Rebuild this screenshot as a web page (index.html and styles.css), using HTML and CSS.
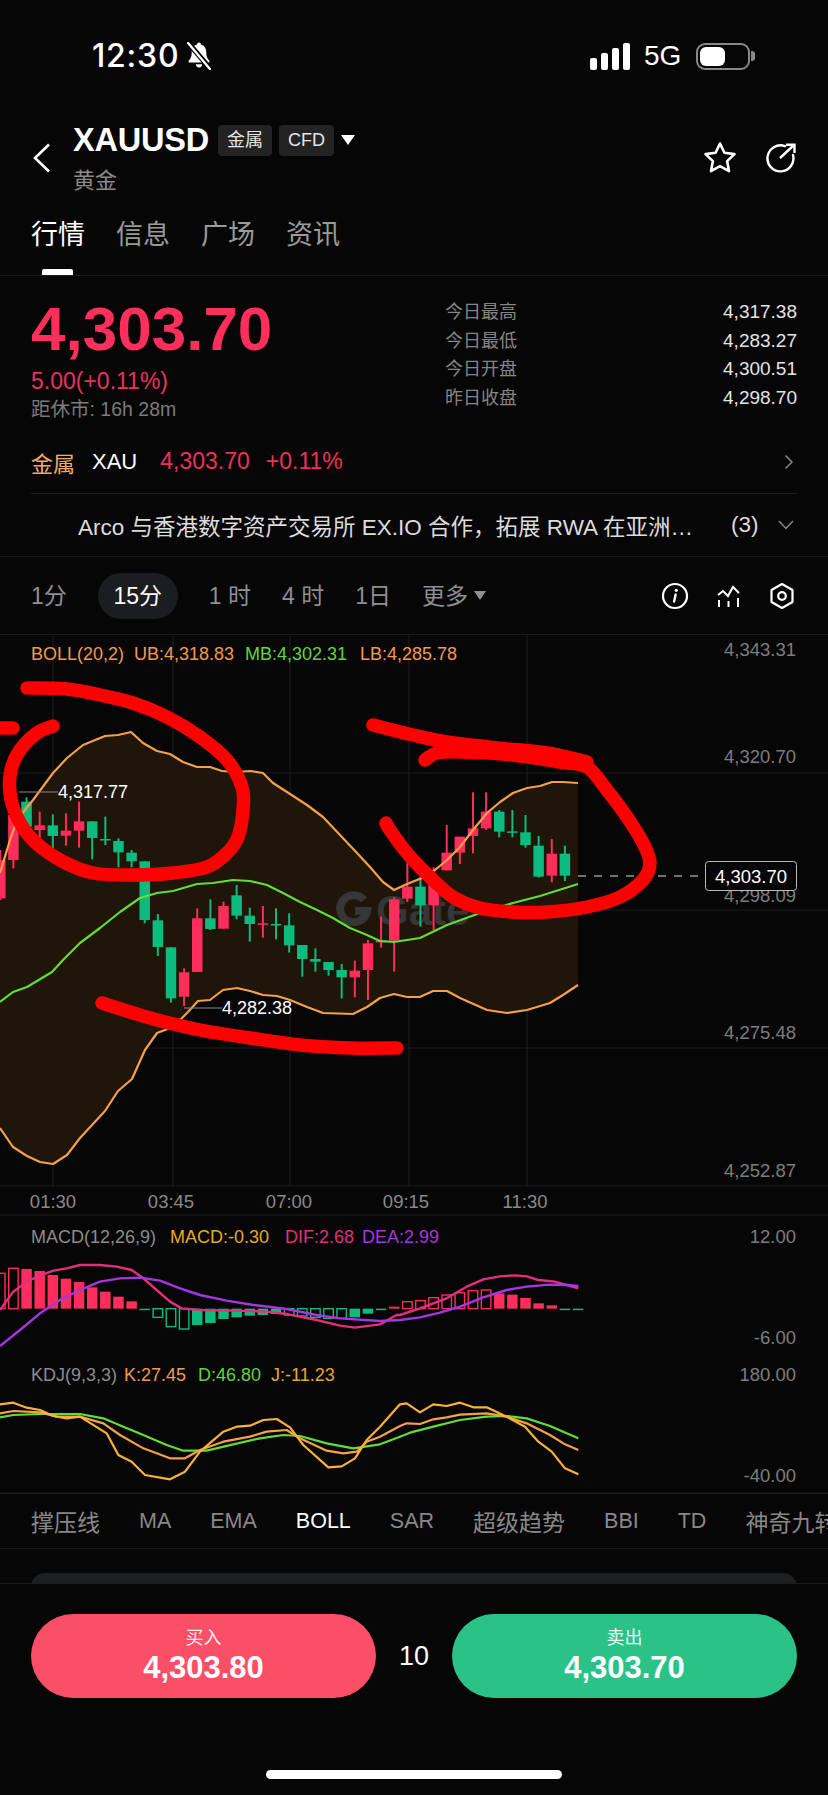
FILE: index.html
```html
<!DOCTYPE html>
<html>
<head>
<title>XAUUSD</title>
<meta charset="UTF-8" name="viewport" content="width=device-width,initial-scale=1.0">
<link rel="stylesheet" href="styles.css">
</head>
<body>
<div class="status">
	<div class="status-left">
		<span class="clock">12:30</span>
		<svg class="bell" viewBox="2.500 1 23 27" width="28" height="28">
			<path fill="#fff" d="M14 1.5c-1.1 0-1.9.8-1.9 1.8C8.600 4.200 7 7.400 7 11c0 4.300-1.200 6.300-3 8v1.800h20V19c-1.800-1.700-3-3.700-3-8 0-3.600-1.600-6.800-5.100-7.700 0-1-.8-1.800-1.900-1.800z"/>
			<path fill="#fff" d="M11 22.500a3 3 0 0 0 6 0z"/>
			<path stroke="#060606" stroke-width="5" d="M3 1l22 26"/>
			<path stroke="#fff" stroke-width="2.200" stroke-linecap="round" d="M3.500 2l21 25"/>
		</svg>
	</div>
	<div class="status-right">
		<div class="signal"><i class="s1"></i><i class="s2"></i><i class="s3"></i><i class="s4"></i></div>
		<span class="net">5G</span>
		<div class="battery"><div class="battery-fill"></div></div>
		<div class="battery-nub"></div>
	</div>
</div>

<div class="head">
	<svg class="back" viewBox="0 0 18 30" width="18" height="30"><path d="M16 1.500L2 15l14 13.500" fill="none" stroke="#fff" stroke-width="2.600"/></svg>
	<div class="head-main">
		<div class="head-top">
			<span class="symbol">XAUUSD</span>
			<span class="tag">金属</span>
			<span class="tag">CFD</span>
			<span class="tri"></span>
		</div>
		<div class="head-sub">黄金</div>
	</div>
	<svg class="star" viewBox="0 0 34 32" width="34" height="32"><path d="M17 2.500l4.400 9.300 10.100 1.300-7.400 7 1.900 10-9-4.900-9 4.900 1.900-10-7.400-7 10.100-1.300z" fill="none" stroke="#fff" stroke-width="2.600" stroke-linejoin="round"/></svg>
	<svg class="share" viewBox="0 0 32 30" width="32" height="30"><path d="M20 3.200A13 13 0 1 0 28 12" fill="none" stroke="#fff" stroke-width="2.400" stroke-linecap="round"/><path d="M15 15L29 2M21 1.800h8.500V10" fill="none" stroke="#fff" stroke-width="2.400"/></svg>
</div>

<div class="tabs">
	<span class="tab active">行情</span>
	<span class="tab">信息</span>
	<span class="tab">广场</span>
	<span class="tab">资讯</span>
</div>

<div class="quote">
	<div class="quote-left">
		<div class="price">4,303.70</div>
		<div class="change">5.00(+0.11%)</div>
		<div class="closing">距休市: 16h 28m</div>
	</div>
	<div class="stats">
		<div class="stat"><span>今日最高</span><b>4,317.38</b></div>
		<div class="stat"><span>今日最低</span><b>4,283.27</b></div>
		<div class="stat"><span>今日开盘</span><b>4,300.51</b></div>
		<div class="stat"><span>昨日收盘</span><b>4,298.70</b></div>
	</div>
</div>

<div class="sector">
	<span class="sector-name">金属</span>
	<span class="sector-code">XAU</span>
	<span class="sector-price">4,303.70</span>
	<span class="sector-pct">+0.11%</span>
	<svg class="chev-right" viewBox="0 0 10 16" width="10" height="16"><path d="M1.500 1.500L8 8l-6.500 6.500" fill="none" stroke="#888" stroke-width="1.500"/></svg>
</div>

<div class="news">
	<span class="news-text">Arco 与香港数字资产交易所 EX.IO 合作，拓展 RWA 在亚洲…</span>
	<span class="news-count">(3)</span>
	<svg class="chev-down" viewBox="0 0 16 10" width="16" height="10"><path d="M1 1l7 7.500L15 1" fill="none" stroke="#888" stroke-width="1.500"/></svg>
</div>

<div class="periods">
	<span class="period">1分</span>
	<span class="period current">15分</span>
	<span class="period">1 时</span>
	<span class="period">4 时</span>
	<span class="period">1日</span>
	<span class="period more">更多<i class="tri-small"></i></span>
	<div class="tools">
		<svg viewBox="0 0 28 28" width="28" height="28"><circle cx="14" cy="14" r="12" fill="none" stroke="#fff" stroke-width="2.200"/><path d="M14.600 12.500l-1.500 7" stroke="#fff" stroke-width="2.400" stroke-linecap="round"/><circle cx="15.300" cy="8.300" r="1.600" fill="#fff"/></svg>
		<svg viewBox="0 0 26 26" width="26" height="26"><path d="M2 12l5-4 5 5 5-9 6 6" fill="none" stroke="#fff" stroke-width="2"/><path d="M3 17v7M12.500 18v6M22 15v9" stroke="#fff" stroke-width="2"/></svg>
		<svg viewBox="0 0 26 28" width="26" height="28"><path d="M13 2l10.500 6v12L13 26 2.500 20V8z" fill="none" stroke="#fff" stroke-width="2.200" stroke-linejoin="round"/><circle cx="13" cy="14" r="3.800" fill="none" stroke="#fff" stroke-width="2.200"/></svg>
	</div>
</div>

<svg id="chart" class="chart" viewBox="0 634 828 859" width="828" height="859">
	<g id="grid"></g>
	<g id="watermark" class="watermark">
		<path d="M364 900a13.500 13.500 0 1 0 3 11h-12" fill="none" stroke-width="8"/>
		<text x="376" y="925">Gate</text>
	</g>
	<g id="candles"></g>
	<g id="lines"></g>

	<g class="mark">
		<path d="M19 792H58M184 1008H222"/>
	</g>
	<text class="lbl white" x="58" y="798">4,317.77</text>
	<text class="lbl white" x="222" y="1014">4,282.38</text>

	<text class="lbl boll-o" x="31" y="660">BOLL(20,2)</text>
	<text class="lbl boll-o" x="134" y="660">UB:4,318.83</text>
	<text class="lbl boll-g" x="245" y="660">MB:4,302.31</text>
	<text class="lbl boll-o" x="360" y="660">LB:4,285.78</text>

	<g class="axis">
		<text x="796" y="656">4,343.31</text>
		<text x="796" y="763">4,320.70</text>
		<text x="796" y="902">4,298.09</text>
		<text x="796" y="1039">4,275.48</text>
		<text x="796" y="1177">4,252.87</text>
		<text x="796" y="1243">12.00</text>
		<text x="796" y="1344">-6.00</text>
		<text x="796" y="1381">180.00</text>
		<text x="796" y="1482">-40.00</text>
	</g>
	<g class="times">
		<text x="53" y="1208">01:30</text>
		<text x="171" y="1208">03:45</text>
		<text x="289" y="1208">07:00</text>
		<text x="406" y="1208">09:15</text>
		<text x="525" y="1208">11:30</text>
	</g>

	<path class="last-line" d="M578 876H705"/>
	<rect class="last-box" x="705.500" y="861.500" width="91" height="29" rx="3"/>
	<text class="lbl white last-text" x="751" y="883">4,303.70</text>

	<text class="lbl gray" x="31" y="1243">MACD(12,26,9)</text>
	<text class="lbl yellow" x="170" y="1243">MACD:-0.30</text>
	<text class="lbl pink" x="285" y="1243">DIF:2.68</text>
	<text class="lbl purple" x="362" y="1243">DEA:2.99</text>

	<text class="lbl gray" x="31" y="1381">KDJ(9,3,3)</text>
	<text class="lbl boll-o" x="124" y="1381">K:27.45</text>
	<text class="lbl boll-g" x="198" y="1381">D:46.80</text>
	<text class="lbl yellow" x="271" y="1381">J:-11.23</text>

	<g id="ink"></g>
</svg>

<div class="indicators">
	<span class="cjk">撑压线</span>
	<span>MA</span>
	<span>EMA</span>
	<span class="on">BOLL</span>
	<span>SAR</span>
	<span class="cjk">超级趋势</span>
	<span>BBI</span>
	<span>TD</span>
	<span class="cjk">神奇九转</span>
</div>

<div class="peek"><div class="peek-card"></div></div>

<div class="trade">
	<div class="trade-row">
		<div class="order buy"><span>买入</span><b>4,303.80</b></div>
		<div class="qty">10</div>
		<div class="order sell"><span>卖出</span><b>4,303.70</b></div>
	</div>
	<div class="home"></div>
</div>
<script src="chart.js"></script>
</body>
</html>
```
FILE: styles.css
```css
*{
  margin:0;
  padding:0;
  box-sizing:border-box;
}

body{
  width:828px;
  height:1795px;
  overflow:hidden;
  background:#060606;
  color:#fff;
  font-family:"Liberation Sans","Noto Sans CJK SC",sans-serif;
}

/* status bar */
.status{
  height:120px;
  padding:42px 73px 0 92px;
  display:flex;
  justify-content:space-between;
  align-items:flex-start;
}
.status-left{display:flex;align-items:center;gap:6px;height:28px}
.clock{font-family:Inter,sans-serif;font-size:32px;font-weight:500;line-height:28px;letter-spacing:.8px}
.status-right{display:flex;align-items:center;height:28px}
.signal{display:flex;align-items:flex-end;gap:4px;height:27px}
.signal i{display:block;width:7px;background:#fff;border-radius:2px}
.s1{height:12px}
.s2{height:17px}
.s3{height:22px}
.s4{height:27px}
.net{font-size:28px;margin-left:14px;width:52px}
.battery{
  width:54px;
  height:27px;
  border:2px solid #888;
  border-radius:9px;
  padding:2px;
}
.battery-fill{width:25px;height:19px;background:#fff;border-radius:6px}
.battery-nub{width:4px;height:10px;background:#888;border-radius:0 3px 3px 0;margin-left:1px}

/* symbol header */
.head{
  height:85px;
  padding:0 31px 0 33px;
  display:flex;
  align-items:flex-start;
}
.back{margin-top:23px}
.head-main{margin-left:22px;flex:1}
.head-top{display:flex;align-items:center;height:34px;margin-top:3px}
.symbol{font-size:32.500px;font-weight:700;margin-right:9px;letter-spacing:-0.2px}
.tag{
  height:31px;
  line-height:31px;
  padding:0 9px;
  margin-right:7px;
  background:#232323;
  border-radius:4px;
  font-size:18px;
  color:#e4e4e4;
}
.tri{
  width:0;
  height:0;
  border-left:7px solid transparent;
  border-right:7px solid transparent;
  border-top:10px solid #fff;
}
.head-sub{font-size:22px;color:#8a8a8a;margin-top:9px;line-height:30px}
.star{margin-top:21px}
.share{margin-top:23px;margin-left:28px}

/* tabs */
.tabs{
  height:71px;
  padding:0 31px;
  display:flex;
  gap:31px;
  border-bottom:1px solid #1b1b1b;
}
.tab{
  position:relative;
  font-size:27px;
  line-height:36px;
  margin-top:12px;
  color:#9a9a9a;
}
.tab.active{color:#fff}
.tab.active::after{
  content:"";
  position:absolute;
  left:11px;
  top:52px;
  width:31px;
  height:6px;
  background:#fff;
  border-radius:2px 2px 0 0;
}

/* quote */
.quote{
  height:154px;
  padding:0 31px;
  display:flex;
  justify-content:space-between;
}
.price{
  font-size:62px;
  font-weight:700;
  line-height:60px;
  margin-top:23px;
  color:#ff2f5b;
}
.change{font-size:23px;line-height:24px;margin-top:10px;color:#e9335e}
.closing{font-size:19.500px;line-height:24px;margin-top:4px;color:#7b7b7b}
.stats{width:352px;padding-top:22px}
.stat{
  display:flex;
  justify-content:space-between;
  height:28.700px;
  line-height:28px;
  font-size:18px;
  color:#858585;
}
.stat b{font-size:19px;font-weight:400;color:#e4e4e4}

/* sector row */
.sector{
  height:64px;
  margin:0 31px;
  display:flex;
  align-items:center;
  border-bottom:1px solid #1e1e1e;
}
.sector-name{font-size:22px;color:#f2aa6c;margin-right:17px}
.sector-code{font-size:22px;margin-right:23px}
.sector-price,.sector-pct{font-size:23px;color:#f0305c}
.sector-pct{margin-left:16px;flex:1}
.chev-right{margin-right:3px}

/* news row */
.news{
  height:63px;
  padding:0 34px 0 78px;
  display:flex;
  align-items:center;
  border-bottom:1px solid #1b1b1b;
  font-size:22.500px;
  color:#dcdcdc;
}
.news-text{width:653px;white-space:nowrap;overflow:hidden}
.news-count{flex:1}

/* period selector */
.periods{
  height:78px;
  padding:0 33px 0 31px;
  display:flex;
  align-items:center;
  font-size:23px;
  color:#8f8f8f;
  border-bottom:1px solid #1b1b1b;
}
.period{line-height:46px;margin-right:31px;white-space:nowrap}
.current{
  background:#1b1d20;
  color:#fff;
  width:80px;
  text-align:center;
  border-radius:23px;
}
.more{display:flex;align-items:center;gap:6px}
.tri-small{
  width:0;
  height:0;
  border-left:6px solid transparent;
  border-right:6px solid transparent;
  border-top:9px solid #8f8f8f;
}
.tools{margin-left:auto;display:flex;align-items:center;gap:27px}
.tools svg{display:block}

/* chart */
.chart{display:block;margin-top:-1px}
.grid-line{stroke:#1c1c1c;stroke-width:1.200}
.watermark path{stroke:#363636}
.watermark text{font-size:42px;font-weight:700;fill:#363636}
.line{fill:none;stroke-linejoin:round;stroke-width:2.200}
.band{fill:#1f1508}
.c-orange{stroke:#f5a04a}
.c-green{stroke:#62dd38}
.c-pink{stroke:#e32f7c;stroke-width:2.400}
.c-purple{stroke:#a735e2;stroke-width:2.400}
.c-yellow{stroke:#fbb336}
.ink{fill:none;stroke:#ff0000;stroke-linecap:round;stroke-linejoin:round;stroke-width:13.500}
.mark path{stroke:#8a8a8a;stroke-width:1.200}
.lbl{font-size:18px}
.white{fill:#fff}
.gray{fill:#8c8c8c}
.boll-o{fill:#f39a4e}
.boll-g{fill:#62d43c}
.yellow{fill:#e9a825}
.pink{fill:#e0307a}
.purple{fill:#a835dc}
.axis text{font-size:18.500px;fill:#7d7d7d;text-anchor:end}
.times text{font-size:18.500px;fill:#8a8a8a;text-anchor:middle}
.last-line{stroke:#ddd;stroke-width:1.200;stroke-dasharray:8 8}
.last-box{fill:#060606;stroke:#bbb;stroke-width:1}
.last-text{text-anchor:middle;font-size:18.500px}

/* indicator tabs */
.indicators{
  height:56px;
  padding:0 31px;
  display:flex;
  align-items:center;
  gap:39px;
  overflow:hidden;
  white-space:nowrap;
  font-size:21.500px;
  color:#888;
  border-top:1px solid #1b1b1b;
  border-bottom:1px solid #1b1b1b;
}
.indicators span{flex:none}
.indicators .cjk{font-size:23px}
.indicators .on{color:#fff}

.peek{height:34px;padding:24px 31px 0;overflow:hidden}
.peek-card{height:30px;background:#1c1f22;border-radius:14px}

/* bottom order bar */
.trade{height:212px;padding-top:30px;border-top:1px solid #1b1b1b}
.trade-row{display:flex;padding:0 31px;align-items:center}
.order{
  width:345px;
  height:84px;
  border-radius:42px;
  display:flex;
  flex-direction:column;
  align-items:center;
  justify-content:center;
}
.order span{font-size:18px;line-height:24px;color:#fff;opacity:.9}
.order b{font-size:31px;font-weight:600;line-height:36px}
.buy{background:#fa4f66}
.sell{background:#2bc287}
.qty{flex:1;text-align:center;font-size:27px}
.home{width:296px;height:9px;background:#fff;border-radius:5px;margin:72px auto 0}
```
FILE: chart.js
```js
var NS = "http://www.w3.org/2000/svg";

function el(parent,name,attrs){
	var e = document.createElementNS(NS,name);
	for (var k in attrs){e.setAttribute(k,attrs[k])}
	parent.appendChild(e);
	return e;
}
function barX(i){return 0.3 + 13.13 * i}
function line(pts){return "M" + pts.map(function(p){return p[0] + " " + p[1]}).join("L")}
// catmull-rom through the points, for the hand drawn strokes
function smooth(pts){
	var d = "M" + pts[0][0] + " " + pts[0][1];
	for (var i = 0;i < pts.length - 1;i++){
		var a = pts[i - 1] || pts[i], b = pts[i], c = pts[i + 1], e = pts[i + 2] || c;
		d += "C" + (b[0] + (c[0] - a[0]) / 6) + " " + (b[1] + (c[1] - a[1]) / 6) + " "
			+ (c[0] - (e[0] - b[0]) / 6) + " " + (c[1] - (e[1] - b[1]) / 6) + " " + c[0] + " " + c[1];
	}
	return d;
}
// the lower panels were read off in 3x pixels, from y 1210
function panel(pts,dx){
	return pts.map(function(p){return [p[0] / 3 + (dx || 0),1210 + p[1] / 3]});
}

var grid = document.getElementById("grid");
[634,773,910,1048,1186,1215,1493].forEach(function(y){
	el(grid,"path",{"class":"grid-line",d:"M0 " + y + "H828"});
});
[53,173,290,409,527].forEach(function(x){
	el(grid,"path",{"class":"grid-line",d:"M" + x + " 634V1186"});
});

var upper = [[0,873],[10,840],[17,820],[33,800],[53,773],[67,758],[83,745],[105,736],[118,735],[131,732],[143,743],[157,751],[170,754],[183,762],[197,767],[210,767],[222,771],[237,772],[250,771],[263,773],[273,783],[287,792],[307,805],[323,817],[340,835],[357,853],[370,867],[383,882],[394,890],[407,884],[422,878],[435,870],[447,860],[460,847],[473,830],[487,813],[500,802],[513,793],[527,788],[540,786],[552,782],[563,782],[578,783]];
var middle = [[0,1002],[13,992],[27,987],[52,972],[63,960],[80,943],[100,928],[120,912],[140,898],[157,893],[173,891],[197,884],[213,883],[233,880],[250,881],[267,885],[283,893],[300,902],[317,910],[333,918],[350,928],[367,935],[380,941],[394,942],[420,938],[447,925],[480,913],[513,903],[540,896],[578,884]];
var lower = [[0,1128],[13,1147],[27,1156],[40,1162],[53,1164],[67,1155],[80,1138],[105,1111],[118,1091],[132,1079],[145,1050],[157,1033],[173,1027],[187,1013],[198,1001],[210,1000],[223,990],[237,988],[250,991],[263,995],[277,996],[290,1000],[307,1007],[323,1013],[353,1014],[367,1007],[380,998],[394,994],[407,997],[420,997],[433,991],[447,991],[460,998],[487,1010],[507,1013],[527,1010],[550,1003],[563,995],[578,985]];

el(grid,"path",{"class":"band",d:line(upper) + "L" + line(lower.slice().reverse()).slice(1) + "Z"});

// color, body top, body bottom, wick top, wick bottom (3x pixels from y 660)
var bars = [
	["r",600,715,570,720],["r",465,600,465,625],["g",425,500,412,510],["r",496,510,455,540],
	["g",496,528,463,570],["r",512,527,460,557],["r",484,512,425,563],["g",484,534,484,598],
	["g",537,541,470,555],["g",543,577,535,622],["g",578,604,570,622],["g",604,780,604,790],
	["g",781,861,762,888],["g",862,1015,862,1028],["r",937,1010,925,1038],["r",775,936,745,936],
	["g",775,807,718,810],["r",738,806,725,806],["g",706,767,675,778],["g",767,792,743,845],
	["r",790,793,738,833],["g",792,795,745,838],["g",796,856,760,878],["g",855,897,855,950],
	["g",897,905,865,935],["g",906,930,906,947],["g",930,952,912,1015],["r",932,952,902,1012],
	["r",850,930,840,1020],["r",841,847,770,863],["r",718,842,712,935],["r",680,716,605,726],
	["g",680,736,650,800],["r",670,736,622,810],["r",578,631,495,631],["r",530,578,530,612],
	["r",505,528,397,580],["r",455,505,397,510],["g",455,515,450,532],["g",514,516,450,532],
	["g",517,555,465,563],["g",557,650,528,653],["r",581,647,537,667],["g",581,647,557,663]
];
var RED = "#ff2d5c", GREEN = "#0dbb7e";
var candles = document.getElementById("candles");
bars.forEach(function(b,i){
	var x = barX(i), c = b[0] == "r" ? RED : GREEN;
	el(candles,"rect",{x:x - 1,y:660 + b[3] / 3,width:2,height:(b[4] - b[3]) / 3,fill:c});
	el(candles,"rect",{x:x - 5.25,y:660 + b[1] / 3,width:10.5,height:Math.max((b[2] - b[1]) / 3,1.5),fill:c});
});

var lines = document.getElementById("lines");
function stroke(pts,cls){el(lines,"path",{"class":"line " + cls,d:line(pts)})}
stroke(upper,"c-orange");
stroke(middle,"c-green");
stroke(lower,"c-orange");

// MACD histogram: f filled, h hollow, value is the far end in 3x pixels
var hist = [
	["rh",190],["rh",175],["rf",177],["rf",183],["rf",195],["rf",206],["rf",216],["rf",232],["rf",245],["rf",260],["rf",274],
	["gf",299],["gh",322],["gh",350],["gh",357],["gf",345],["gf",339],["gf",327],["gf",322],["gf",317],["gf",315],["gf",312],
	["gh",315],["gh",318],["gh",322],["gh",325],["gh",325],["gf",322],["gf",311],["gf",300],["rf",290],["rh",275],["rh",272],
	["rh",263],["rh",255],["rh",248],["rh",242],["rh",240],["rf",250],["rf",254],["rf",264],["rf",280],["rf",286],["gf",300],["gf",300]
];
hist.forEach(function(h,i){
	var base = 1210 + 296 / 3, end = 1210 + h[1] / 3;
	var c = h[0][0] == "r" ? RED : GREEN;
	var top = Math.min(base,end), height = Math.max(Math.abs(end - base),1.5);
	if (h[0][1] == "f"){
		el(lines,"rect",{x:barX(i) - 5.25,y:top,width:10.5,height:height,fill:c});
	} else {
		el(lines,"rect",{x:barX(i) - 4.75,y:top,width:9.5,height:height,fill:"none",stroke:c,"stroke-width":1.4});
	}
});

stroke(panel([[0,300],[40,245],[80,215],[120,197],[160,182],[200,175],[240,165],[300,165],[350,170],[395,180],[430,205],[470,240],[510,275],[545,295],[600,300],[700,302],[800,305],[860,312],[950,330],[1020,347],[1065,353],[1140,343],[1190,315]]).concat(panel([[0,315],[60,295],[140,265],[200,230],[250,208],[300,199],[345,196],[380,199],[415,210],[460,214],[500,225],[535,235]],400)),"c-pink");
stroke(panel([[0,408],[60,360],[120,310],[180,270],[240,240],[300,215],[360,205],[420,203],[480,212],[540,235],[600,255],[680,272],[760,285],[860,297],[950,315],[1020,325],[1140,333]]).concat(panel([[0,330],[60,322],[120,308],[180,290],[250,262],[320,240],[380,230],[450,224],[500,225],[535,228]],400)),"c-purple");

stroke(panel([[0,622],[40,615],[120,612],[240,612],[310,625],[370,650],[430,675],[500,705],[550,722],[620,722],[700,703],[780,685],[850,675],[900,678],[980,700],[1060,715],[1140,703]]).concat(panel([[0,680],[30,668],[100,650],[180,630],[260,620],[320,618],[380,625],[450,648],[500,670],[535,685]],400)),"c-green");
stroke(panel([[0,610],[40,603],[120,607],[170,620],[240,620],[310,640],[360,675],[430,715],[510,745],[555,745],[600,720],[670,695],[750,680],[800,665],[860,660],[900,685],[980,722],[1030,730],[1070,725],[1100,695],[1140,680]]).concat(panel([[0,648],[20,640],[60,642],[100,628],[140,622],[180,614],[260,610],[320,620],[380,640],[450,675],[495,703],[535,720]],400)),"c-orange");
stroke(panel([[0,583],[40,578],[80,593],[120,600],[160,618],[200,625],[240,620],[320,670],[355,735],[395,755],[435,795],[510,808],[555,785],[600,725],[670,665],[710,650],[750,647],[790,630],[830,627],[870,652],[910,705],[985,772],[1025,769],[1065,745],[1100,690],[1140,650]]).concat(panel([[0,583],[20,580],[60,607],[100,583],[140,588],[180,578],[220,592],[260,592],[320,620],[375,650],[415,695],[455,725],[495,775],[535,793]],400)),"c-yellow");

// red marker drawn over the screenshot
var ink = document.getElementById("ink");
[
	[[27,688],[67,689],[100,695],[133,703],[167,717],[200,737],[227,760],[242,787],[243,810],[238,837],[227,853],[207,867],[173,873],[133,875],[93,873],[60,860],[33,840],[17,817],[10,793],[11,770],[20,750],[37,733],[53,726]],
	[[-5,728],[13,728]],
	[[102,1003],[150,1018],[200,1030],[250,1038],[300,1045],[350,1048],[397,1048]],
	[[373,725],[413,735],[447,742],[497,748],[547,753],[587,762]],
	[[425,760],[437,753],[463,752],[513,755],[560,762],[587,767],[607,790],[627,817],[643,843],[650,863],[643,880],[620,897],[587,907],[547,912],[513,912],[480,908],[453,897],[430,877],[407,853],[390,830],[386,823]]
].forEach(function(pts){
	el(ink,"path",{"class":"ink",d:smooth(pts)});
});
```
